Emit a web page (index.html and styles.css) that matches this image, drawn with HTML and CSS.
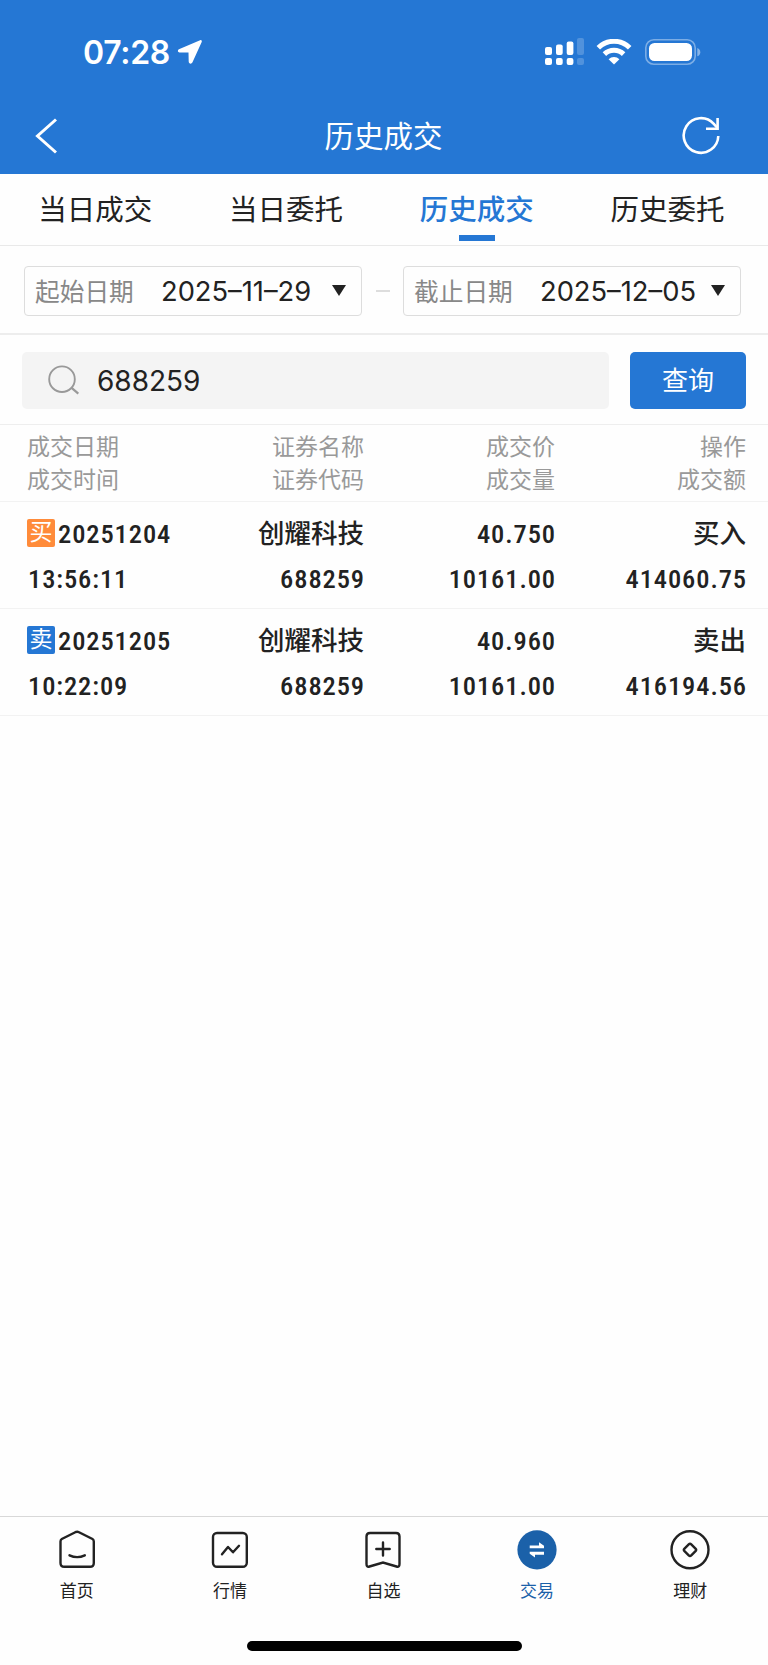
FILE: index.html
```html
<!DOCTYPE html>
<html lang="zh-CN">
<head>
<meta charset="UTF-8" />
<title>历史成交</title>
<link rel="stylesheet" href="styles.css">
</head>
<body>
  <header class="top">
    <div class="status-bar">
      <span class="clock">07:28</span>
      <svg class="location" width="26" height="26" viewBox="0 0 26 26"><path d="M23.1 1.2 1.9 10.2C.3 11 .6 13.400 2.500 13.500L11.500 13.600 11.700 22.600C11.800 25.200 14.600 25.400 15.500 23.300L24.700 3C25.200 1.700 24.300.7 23.100 1.200Z" fill="#fff"/></svg>
      <svg class="signal" width="40" height="28" viewBox="0 0 40 28" fill="#fff">
        <rect x="1" y="9" width="7" height="8" rx="2"/><rect x="1" y="20" width="7" height="7" rx="2"/>
        <rect x="12" y="6.500" width="6.700" height="10.500" rx="2"/><rect x="12" y="20" width="6.700" height="7" rx="2"/>
        <rect x="22.700" y="3.500" width="6.700" height="13.500" rx="2"/><rect x="22.700" y="20" width="6.700" height="7" rx="2"/>
        <g opacity=".2"><rect x="33" y="0" width="7" height="17" rx="2"/><rect x="33" y="20" width="7" height="7" rx="2"/></g>
      </svg>
      <svg class="wifi" width="36" height="26" viewBox="0 0 36 26">
        <g fill="none" stroke="#fff" stroke-width="5">
          <path d="M2.300 8.700A22.400 22.400 0 0 1 33.700 8.700"/>
          <path d="M8.400 15.100A13.700 13.700 0 0 1 27.600 15.100"/>
        </g>
        <path d="M18 25.500 12.600 20.200A7.700 7.700 0 0 1 23.400 20.200Z" fill="#fff"/>
      </svg>
      <svg class="battery" width="56" height="26" viewBox="0 0 56 26">
        <rect x=".8" y=".8" width="49.400" height="24.400" rx="8" fill="none" stroke="#fff" stroke-opacity=".4" stroke-width="1.600"/>
        <rect x="4" y="4" width="43" height="18" rx="5.500" fill="#fff"/>
        <path d="M52.300 9v8.300q3-1.200 3-4.100t-3-4.200z" fill="#fff" opacity=".45"/>
      </svg>
    </div>
    <div class="nav-bar">
      <svg class="back" width="24" height="36" viewBox="0 0 24 36"><path d="M21 1.500 2.500 18 21 34.500" fill="none" stroke="#fff" stroke-width="3"/></svg>
      <h1 class="title">历史成交</h1>
      <svg class="refresh" width="40" height="40" viewBox="0 0 40 40" fill="none" stroke="#fff" stroke-width="2.600">
        <path d="M36.300 20A17.300 17.300 0 1 1 31.800 7.800L35 11.500"/>
        <path d="M35.600 2V12.700H24"/>
      </svg>
    </div>
  </header>

  <nav class="tabs">
    <a class="tab">当日成交</a>
    <a class="tab">当日委托</a>
    <a class="tab active">历史成交</a>
    <a class="tab">历史委托</a>
  </nav>

  <div class="dates">
    <div class="date-box">
      <span class="date-label">起始日期</span>
      <span class="date-value">2025–11–29</span>
      <span class="arrow"></span>
    </div>
    <span class="dash"></span>
    <div class="date-box">
      <span class="date-label">截止日期</span>
      <span class="date-value">2025–12–05</span>
      <span class="arrow"></span>
    </div>
  </div>

  <div class="search">
    <div class="search-box">
      <svg class="search-icon" width="32" height="30" viewBox="0 0 32 30" fill="none" stroke="#999" stroke-width="1.900"><circle cx="14" cy="14.200" r="12.800"/><path d="m23.300 22.600 7 6" stroke-width="2.200"/></svg>
      <span class="search-text">688259</span>
    </div>
    <button class="query">查询</button>
  </div>

  <div class="deal-head">
    <div class="cell">成交日期<br>成交时间</div>
    <div class="cell">证券名称<br>证券代码</div>
    <div class="cell">成交价<br>成交量</div>
    <div class="cell">操作<br>成交额</div>
  </div>

  <div class="deal">
    <div class="cell"><p class="line"><i class="tag buy">买</i>20251204</p><p class="line">13:56:11</p></div>
    <div class="cell"><p class="line name">创耀科技</p><p class="line">688259</p></div>
    <div class="cell"><p class="line">40.750</p><p class="line">10161.00</p></div>
    <div class="cell"><p class="line name">买入</p><p class="line">414060.75</p></div>
  </div>
  <div class="deal">
    <div class="cell"><p class="line"><i class="tag sell">卖</i>20251205</p><p class="line">10:22:09</p></div>
    <div class="cell"><p class="line name">创耀科技</p><p class="line">688259</p></div>
    <div class="cell"><p class="line">40.960</p><p class="line">10161.00</p></div>
    <div class="cell"><p class="line name">卖出</p><p class="line">416194.56</p></div>
  </div>

  <footer class="bottom">
    <div class="menu">
      <a class="menu-item">
        <svg class="menu-icon" viewBox="0 0 40 40"><path d="M18.300 2.200 4.800 9Q3.500 9.800 3.500 11.500V33Q3.500 36.800 7.300 36.800H33Q36.800 36.800 36.800 33V11.500Q36.800 9.800 35.500 9L22 2.200Q20.200 1.300 18.300 2.200Z"/><path d="M12.500 25.300Q20.200 29 27.800 25.300" stroke-linecap="round"/></svg>
        <span>首页</span>
      </a>
      <a class="menu-item">
        <svg class="menu-icon" viewBox="0 0 40 40"><rect x="3" y="3" width="33.800" height="33.800" rx="4"/><path d="m12 24.300 6-7.300 5 5.300 6-6.500" stroke-linecap="round" stroke-linejoin="round"/></svg>
        <span>行情</span>
      </a>
      <a class="menu-item">
        <svg class="menu-icon" viewBox="0 0 40 40"><path d="M7 3H33Q36.500 3 36.500 6.500V34Q36.500 37.500 33.500 36.500L20 32.500 6.500 36.500Q3.500 37.500 3.500 34V6.500Q3.500 3 7 3Z"/><path d="M20 12.500v13M13.300 19h13.400" stroke-linecap="round"/></svg>
        <span>自选</span>
      </a>
      <a class="menu-item active">
        <svg class="menu-icon" viewBox="0 0 40 40"><circle cx="20" cy="19.800" r="19.600" fill="#1b61a9" stroke="none"/><path d="M12.700 15.400H22V12.300L27 15.800V18.200H12.700ZM27 24.700H18V27.500L12.700 23.800V21.800H27Z" fill="#fff" stroke="none"/></svg>
        <span>交易</span>
      </a>
      <a class="menu-item">
        <svg class="menu-icon" viewBox="0 0 40 40"><circle cx="20" cy="19.800" r="18.500"/><rect x="15.200" y="15" width="9.600" height="9.600" rx="1.800" transform="rotate(45 20 19.800)"/></svg>
        <span>理财</span>
      </a>
    </div>
    <div class="home-bar"></div>
  </footer>
</body>
</html>
```
FILE: styles.css
```css
* {
  box-sizing: border-box;
}
body {
  margin: 0;
  height: 1665px;
  display: flex;
  flex-direction: column;
  background: #fefefe;
  color: #222;
  font-family: Inter, "Noto Sans CJK SC", sans-serif;
}
.top {
  height: 174px;
  flex-shrink: 0;
  background: #2577d4;
  color: #fff;
}
.status-bar {
  height: 98px;
  padding: 6px 67px 0 83px;
  display: flex;
  align-items: center;
}
.clock {
  width: 94px;
  font-size: 32px;
  font-weight: 600;
  letter-spacing: -0.3px;
  white-space: nowrap;
}
.signal {
  margin-left: auto;
}
.wifi {
  margin: 0 13px 0 12px;
}
.nav-bar {
  height: 76px;
  padding: 0 46px 1px 35px;
  display: flex;
  align-items: center;
}
.title {
  flex: 1;
  margin: 0;
  padding-left: 26px;
  font-size: 29.5px;
  font-weight: 400;
  line-height: 40px;
  text-align: center;
}
.tabs {
  height: 72px;
  flex-shrink: 0;
  padding: 0 5px 0 0;
  display: grid;
  grid-template-columns: repeat(4, 1fr);
  border-bottom: 1px solid #e9e9e9;
}
.tab {
  display: flex;
  flex-direction: column;
  align-items: center;
  padding-top: 16px;
  font-size: 28.5px;
  line-height: 40px;
}
.tab.active {
  color: #2577d4;
  font-weight: 500;
}
.tab.active::after {
  content: "";
  width: 36px;
  height: 6px;
  margin-top: 5px;
  background: #2577d4;
}
.dates {
  height: 89px;
  flex-shrink: 0;
  padding: 2px 27px 0 24px;
  display: flex;
  align-items: center;
  justify-content: space-between;
  border-bottom: 2px solid #ededed;
}
.date-box {
  width: 338px;
  height: 50px;
  padding: 0 15px 0 10px;
  display: flex;
  align-items: center;
  border: 1px solid #ddd;
  border-radius: 4px;
}
.date-label {
  width: 126px;
  margin-top: -2px;
  color: #888;
  font-size: 24.7px;
}
.date-value {
  margin-top: 2px;
  font-size: 27.3px;
  white-space: nowrap;
}
.arrow {
  margin-left: auto;
  border: 7px solid transparent;
  border-top: 11px solid #222;
  border-bottom: 0;
}
.dash {
  width: 14px;
  height: 2px;
  background: #ddd;
}
.search {
  height: 90px;
  flex-shrink: 0;
  padding: 1px 22px 0;
  display: flex;
  align-items: center;
  justify-content: space-between;
  border-bottom: 1px solid #eee;
}
.search-box {
  width: 587px;
  height: 57px;
  padding-left: 26px;
  display: flex;
  align-items: center;
  background: #f4f4f4;
  border-radius: 5px;
}
.search-text {
  margin-left: 17px;
  padding-top: 1px;
  font-size: 28px;
}
.query {
  width: 116px;
  height: 57px;
  padding: 0 0 3px;
  border: 0;
  border-radius: 5px;
  background: #2577d4;
  color: #fff;
  font-family: inherit;
  font-size: 26px;
}
.deal-head,
.deal {
  flex-shrink: 0;
  padding: 0 22px 0 28px;
  display: grid;
  grid-template-columns: 144px 192px 191px 191px;
  text-align: right;
  border-bottom: 1px solid #f2f2f2;
}
.cell:first-child {
  text-align: left;
  white-space: nowrap;
}
.deal-head {
  height: 77px;
  padding-top: 6px;
  padding-left: 27px;
  grid-template-columns: 145px 192px 191px 191px;
  color: #999;
  font-size: 23px;
  line-height: 33px;
}
.deal {
  height: 107px;
  padding-top: 9px;
  font-family: Roboto, "Noto Sans CJK SC", sans-serif;
  font-size: 26.5px;
  font-weight: 500;
  font-stretch: 85%;
  line-height: 45px;
}
.line {
  margin: 0 -1px 0 0;
  height: 45px;
  letter-spacing: 0.9px;
}
.name {
  margin-right: 0;
  letter-spacing: 0;
}
.tag {
  display: inline-block;
  width: 28px;
  height: 28px;
  margin: 0 3px 0 -1px;
  border-radius: 2px;
  color: #fff;
  font-size: 23px;
  font-style: normal;
  font-weight: 400;
  letter-spacing: 0;
  line-height: 28px;
  text-align: center;
  vertical-align: 3px;
}
.buy {
  background: #ff8b3a;
}
.sell {
  background: #2577d4;
}
.bottom {
  height: 149px;
  margin-top: auto;
  flex-shrink: 0;
  border-top: 1px solid #d8d8d8;
}
.menu {
  height: 124px;
  padding-right: 1px;
  display: grid;
  grid-template-columns: repeat(5, 1fr);
}
.menu-item {
  display: flex;
  flex-direction: column;
  align-items: center;
  padding-top: 13px;
  font-size: 17px;
  line-height: 24px;
}
.menu-item.active {
  color: #1b61a9;
}
.menu-icon {
  width: 40px;
  height: 40px;
  margin-bottom: 9px;
  fill: none;
  stroke: #222;
  stroke-width: 2.4;
}
.home-bar {
  width: 275px;
  height: 10px;
  margin: 0 auto;
  border-radius: 5px;
  background: #000;
}
```
